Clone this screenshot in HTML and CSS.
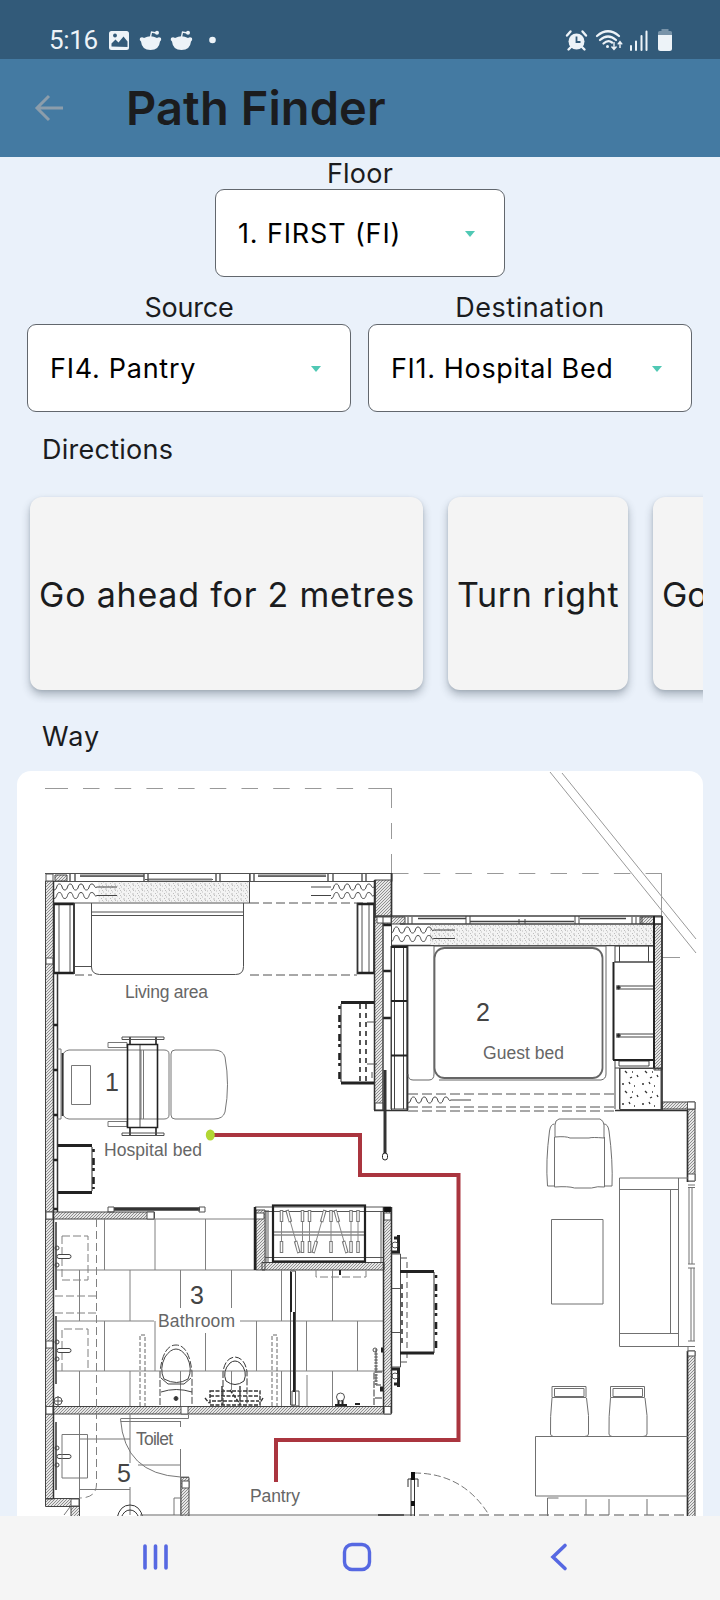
FILE: index.html
```html
<!DOCTYPE html>
<html lang="en">
<head>
<meta charset="utf-8">
<title>Path Finder</title>
<link rel="stylesheet" href="styles.css">
</head>
<body>
<div class="screen">
  <div class="status">
    <span class="clock">5:16</span>
    <svg class="status-left" width="110" height="30" viewBox="106 26 110 30">
      <rect x="109" y="31" width="20" height="19" rx="2.5" fill="#edf3f8"/>
      <path d="M111.500 46.500v-3l4-4 3 3 5-6 4 5v5.500z" fill="#325a79"/><circle cx="115" cy="35.500" r="1.900" fill="#325a79"/>
      <g id="bot"><path d="M140 38q2-1.500 4 0 6.500-3.500 13 0 2-1.500 4 0 .8 2-1 3.500-.8 8.500-9.500 8.500t-9.500-8.500q-2-1.500-1-3.500z" fill="#edf3f8"/><path d="M150.500 37l1-5 5 1" fill="none" stroke="#edf3f8" stroke-width="1.300"/><circle cx="157" cy="32.800" r="2" fill="#edf3f8"/></g>
      <use href="#bot" x="31"/>
      <circle cx="212.500" cy="40" r="3.300" fill="#edf3f8"/>
    </svg>
    <svg class="status-right" width="112" height="30" viewBox="564 26 112 30">
      <circle cx="576.500" cy="41.500" r="8" fill="#edf3f8"/>
      <path d="M567 35.500l3.500-4M586 35.500l-3.500-4M571 47l-2.500 2.500M582 47l2.500 2.500" stroke="#edf3f8" stroke-width="2.400" stroke-linecap="round"/>
      <path d="M576.500 36.500v5.500h4" fill="none" stroke="#325a79" stroke-width="1.800"/>
      <path d="M597 36q11-9.500 22 0M600 40q8-7 16 0M603.500 43.500q4.500-4 8.500-1" fill="none" stroke="#edf3f8" stroke-width="2.200" stroke-linecap="round"/>
      <circle cx="607.500" cy="46.500" r="1.500" fill="#edf3f8"/>
      <path d="M614 42v7m-2.500-2.500l2.500 3 2.500-3M620 48v-6m-2.200 2.400l2.200-2.800 2.200 2.800" fill="none" stroke="#edf3f8" stroke-width="1.400"/>
      <path d="M631 46v4M636 41.500v8.500M641.500 36v14M646.500 31.500v18.500" stroke="#edf3f8" stroke-width="2" stroke-linecap="round"/>
      <path d="M658 35v-2.500q0-1.500 1.500-1.500h2v-2h7v2h2q1.500 0 1.500 1.500v2.500z" fill="#7893a9"/>
      <path d="M658 35h14v13.500q0 2.500-2.500 2.500h-9q-2.500 0-2.500-2.500z" fill="#edf3f8"/>
    </svg>
  </div>
  <header class="appbar">
    <svg class="back" width="32" height="32" viewBox="0 0 32 32"><path d="M16 5L4 17l12 12M4 17h26" fill="none" stroke="#8c9dab" stroke-width="3"/></svg>
    <h1 class="title">Path Finder</h1>
  </header>
  <main class="content">
    <div class="field field-floor">
      <label class="label label-floor">Floor</label>
      <div class="select"><span class="val val-floor">1. FIRST (FI)</span><i class="caret"></i></div>
    </div>
    <div class="pair">
      <div class="field"><label class="label label-source">Source</label>
        <div class="select"><span class="val val-source">FI4. Pantry</span><i class="caret"></i></div></div>
      <div class="field"><label class="label label-dest">Destination</label>
        <div class="select"><span class="val val-dest">FI1. Hospital Bed</span><i class="caret"></i></div></div>
    </div>
    <h2 class="section section-directions">Directions</h2>
    <div class="steps">
      <div class="step step-first">Go ahead for 2 metres</div>
      <div class="step step-second">Turn right</div>
      <div class="step step-third">Go</div>
    </div>
    <h2 class="section section-way">Way</h2>
    <div class="map">
<svg class="plan" width="686" height="745" viewBox="17 771 686 745" fill="none" stroke="#505050" stroke-width="1">
<defs>
  <pattern id="hatch" width="3" height="3" patternUnits="userSpaceOnUse"><rect width="3" height="3" fill="#e6e6e6" stroke="none"/><path d="M-1 1L1-1M0 3L3 0M2 4L4 2" stroke="#777" stroke-width=".8"/></pattern>
  <pattern id="grain" width="9" height="5" patternUnits="userSpaceOnUse"><rect width="9" height="5" fill="#f3f3f3" stroke="none"/><path d="M0 1h1M4 2h1M7 .5h1M2 3.500h1M6 4h2M3 .5h1" stroke="#b0b0b0" stroke-width=".8"/></pattern>
  <pattern id="stone" width="20" height="20" patternUnits="userSpaceOnUse"><path d="M2 4h2M9 2l1 2M5 11l2 2M12 12h1M17 15l1 2M10 18l2-1M14 6h1" stroke="#333" stroke-width="1.300"/></pattern>
  <path id="wave" d="M0 3c3.500 0 2-6 5.400-6s2 6 5.400 6 2-6 5.400-6 2 6 5.400 6 2-6 5.400-6 2 6 5.400 6 2-6 5.400-6 2 5 5.200 3"/>
</defs>
<!-- roof outline -->
<g stroke="#999">
  <path d="M45 788.500h347" stroke-dasharray="23 15 16.500 15.200 16.500 15.200 16.500 15.200 16.500 15.200 16.500 15.200 16.500 15.200 16.500 15.200 16.500 15.200 16.500 15.200 30"/>
  <path d="M391.500 788v86" stroke-dasharray="20 15 16 15"/>
  <path d="M392 873.500h270" stroke-dasharray="16.500 15.200"/><path d="M647 873.500h14.500v42M662 957.500h18"/>
  <path d="M550 772L696 953M562 773L696 939"/>
</g>
<!-- walls -->
<g fill="url(#hatch)" stroke="#444">
  <path d="M45.500 881h8v618h-8zM45.500 1212h109v7h-109zM45.500 1406.500h346v7.500h-346zM45.500 1498.500h34v8h-34zM71 1506h8.500v12h-8.500z"/>
  <path d="M374.500 880h17v37h-17zM374.500 917h8.500v193h-8.500zM383 917h22v7h-22zM654 924h8v146h-8zM640 917h22v7h-22zM662 1102h33v7h-33zM687.500 1109h7.500v72h-7.500zM687.500 1351h7.500v167h-7.500z"/>
  <path d="M256 1210h9v60h-9zM262 1262.500h122v7.500h-122zM383.500 1207.500h8v206h-8zM181 1477.500h8v40h-8z"/>
  <path d="M55 875h12v6h-12z"/>
</g>
<g fill="#fff" stroke="#555"><path d="M46 874h7v7h-7zM46 958h7v6h-7zM46 1212h7v7h-7zM147 1212h7v7h-7zM46 1406.500h7v7.500h-7zM181 1406.500h7v7.500h-7zM384 1213h7v7h-7zM384 1406.500h7v7.500h-7zM256 1213h8v6h-8zM687.500 1102h7.500v7h-7.500zM687.500 1174h7.500v7h-7.500zM687.500 1351h7.500v5h-7.500zM654 917h8v7h-8zM375 1103h8v7h-8zM182 1481h7v7h-7zM46 1341h7v7h-7zM71 1499h8v7h-8zM377 917h14v6h-14z"/></g>
<!-- living area window band -->
<path d="M45 873.500h347v8M53 881.500h321M80 876.500h64M145 879.500h68M258 876.500h68M53 903h197"/>
<path d="M80 875.500h64M148 879.500h64M258 875.500h68" stroke-width="2" stroke="#777"/>
<path d="M70 874v7M75 874v7M144 874v7M148 874v7M216 874v7M220 874v7M250 874v7M254 874v7M328 874v7M333 874v7M362 874v7M366 874v7" stroke-width="1.400"/>
<rect x="98" y="882" width="151" height="20" fill="url(#grain)" stroke="none"/>
<path d="M249.500 874v29"/>
<g stroke="#444"><use href="#wave" x="54" y="887"/><use href="#wave" x="54" y="895.500"/><path d="M97 887h20M97 895.500h20M331 887h-20M331 895.500h-20"/><use href="#wave" x="331" y="887"/><use href="#wave" x="331" y="895.500"/></g>
<path d="M250 903h124M75 975h17M250 975h107" stroke-dasharray="9 4"/>
<path d="M54.500 903.500h19.500v70h-19.500zM59 905v68M70 905v68M357.500 903.500h16v70h-16zM362 905v68M369 905v68"/>
<path d="M54 904h20M54 973h20M357 904h17M357 973h17" stroke="#222" stroke-width="2.500"/><path d="M74 903v71M357.500 903v71" stroke="#333" stroke-width="1.800"/>
<path d="M91.500 903v64q0 7 8 7.500h136q8 0 8-8v-63.500M91.500 912h152M91.500 915.500h152M75 966.500h17"/>
<path d="M57.500 974v238M374.500 880v230" stroke="#333" stroke-width="1.500"/>
<path d="M53 1025h5M53 1070h5M53 1115h5M53 1160h5M53 1209h5M383 1018h8M383 971h8M383 925h8" stroke="#222" stroke-width="2.500"/>
<!-- guest room -->
<path d="M376 916h286M400 924h262M418 918.500h48M470 921.500h104M580 918.500h46M391.500 945.500h262" stroke="#444" stroke-width="1.300"/>
<path d="M408 917v7M412 917v7M466 916v8M470 916v8M519 919v5M525 919v5M575 916v8M579 916v8M632 917v7M636 917v7M642 917v7" stroke="#444"/>
<rect x="430" y="925" width="224" height="20" fill="url(#grain)" stroke="none"/>
<g stroke="#444"><use href="#wave" x="391" y="930"/><use href="#wave" x="391" y="938.500"/><path d="M434 930h21M434 938.500h21M451 1100h20"/><use href="#wave" x="408" y="1100"/></g>
<path d="M391.500 874v236M391 946h16v163h-16zM394.500 946v163M403.500 946v163M383 917v193" stroke="#444"/><path d="M407.500 945v165" stroke="#333" stroke-width="1.800"/>
<path d="M391 947h16M391 1001h16M391 1055.500h16" stroke="#222" stroke-width="2.200"/>
<path d="M408 1074q0 6 5 6h16q5 0 5-6V946h172v128q0 5-5 6h-162" stroke="#666"/>
<rect x="434.500" y="948" width="168" height="130" rx="10" stroke="#666" stroke-width="1.800"/>
<path d="M615 946h39v16h-39zM619.500 946v16M648.500 946v16M614 962h40v98h-40M619 1061h30v5h-30zM615 1060v49M619.500 1068v41M615 1068h47M616 986h37M616 989h37M616 1034h37M616 1037h37" stroke="#444"/>
<path d="M613.500 962v98M654 916v152" stroke="#222" stroke-width="2"/><path d="M613 1060h41" stroke="#222" stroke-width="1.800"/>
<circle cx="618.500" cy="987.500" r="1.800" fill="#222"/><circle cx="618.500" cy="1035.500" r="1.800" fill="#222"/>
<rect x="620" y="1068.500" width="41" height="41" fill="url(#stone)" stroke="#444"/>
<path d="M408 1094h207M408 1107h207M408 1111h207" stroke-dasharray="10 4"/>
<path d="M374 1110.500h34M615 1110.500h73M687.500 1110v72M375 880v37M391.500 873v44M662 916v194M687.500 1351v165" stroke="#333" stroke-width="1.700"/>
<!-- hospital bed -->
<path d="M57 1049h4v70h-4M71.500 1065.500h19v39h-19zM69 1050h95q5 0 5 4v61q0 4-5 4h-95q-6-1-6-6v-57q0-5 6-6zM175 1050h39q9 0 11 7 5 28 0 55-2 7-11 7h-39q-4 0-4-4v-61q0-4 4-4zM141 1050v69M143.500 1050v69M108 1042.500h19v5h-19zM108 1121.500h19v5h-19z" stroke="#777"/>
<path d="M62.500 1053v63" stroke="#333" stroke-width="1.800"/>
<path d="M127.500 1044.500h30v83h-30zM130 1037v8M156 1037v8M130 1127v8M156 1127v8" stroke="#222" stroke-width="1.600"/>
<path d="M140 1045v82M122 1037h42v2.500h-42zM122 1133h42v2.500h-42z"/>
<!-- cabinets with hinged fronts -->
<g stroke="#222"><path d="M58 1145.500h34M58 1192.500h34M341 1002.500h33M341 1083h33" stroke-width="3"/><path d="M92 1147v44M341 1004v78"/><path d="M93.500 1149v40M339.500 1006v74" stroke-width="2.600" stroke-dasharray="3 6 7 3"/><path d="M360 1004v78M366 1004v78" stroke="#555" stroke-width="2" stroke-dasharray="5 4"/></g>
<path d="M367 1022h9M367 1064h10M372 1072v6"/>
<path d="M385 1070v84" stroke="#333" stroke-width="3"/><rect x="382.500" y="1153" width="5" height="7" rx="2.500" stroke="#222" fill="#fff"/>
<path d="M114 1209h86" stroke="#333" stroke-width="3.500"/><path d="M108 1207h6v5h-6zM199 1207h6v5h-6z"/>
<!-- bathroom -->
<g stroke="#808080">
  <path d="M154 1219h101M57 1270h199M57 1321h97M240 1321h143M57 1371h326"/>
  <path d="M104.500 1219v51M155 1219v51M205.500 1219v51M79.500 1270v51M130 1270v51M180.500 1270v38M231.500 1270v38M281.500 1270v51M104.500 1321v50M155 1321v50M205.500 1333v38M256.500 1321v50M306.500 1321v50M332.500 1270v51M357.500 1321v50M79.500 1371v35M130 1371v35M180.500 1371v35M231.500 1371v19M281.500 1371v35M332.500 1371v35M307 1375v31"/>
  <path d="M96.500 1219v265q0 14-17 14" stroke-dasharray="8 4"/>
  <path d="M62 1236h26v44h-26zM62 1371v-42h26v42M55 1296h41M55 1313h41M316 1270v7h50v-7" stroke-dasharray="8 3"/>
  <path d="M140 1406v-71h5v71M272 1406v-71h5v71" stroke-dasharray="4 2" stroke="#666"/>
</g>
<path d="M53.500 881v618M56 1222v68M56 1316v68M56 1422v68" stroke="#333" stroke-width="1.500"/>
<g id="tap" stroke="#444"><circle cx="57" cy="1248" r="2"/><circle cx="57" cy="1265" r="2"/><rect x="57" y="1254.500" width="14" height="4" rx="2"/></g><use href="#tap" y="94"/><use href="#tap" y="200"/>
<g stroke="#444"><path d="M160 1405v-33q3-27 16-27t16 27v33" stroke-dasharray="7 2"/><path d="M164 1379q-5-10 1-22 11-16 22 0 6 12 1 22-11 7-24 0zM161 1378l7 6h16l7-6M161 1392q15-5 31 0"/><circle cx="176" cy="1398.500" r="2" fill="#333"/></g>
<g stroke="#333"><path d="M223 1405v-33q2-14 12-15 10 1 12 15v33" stroke-dasharray="7 2"/><path d="M226 1381q-4-10 4-18 5-4 10 0 8 8 4 18-9 7-18 0z"/><path d="M210 1391h50v14h-50zM210 1396h50M222 1386v19M240 1386v19M230 1390l10 14M205 1398l4 5M263 1398l-3 5M212 1401h47" stroke-width="1.400" stroke-dasharray="4 1.500"/></g>
<path d="M53 1401h10M58 1396v10" stroke="#555"/><path d="M338.500 1400v4M342.500 1400v4M335 1405h12M355 1404h5" stroke="#222" stroke-width="2"/><circle cx="58" cy="1401" r="4"/><circle cx="340.500" cy="1397" r="4"/>
<path d="M290.500 1271h5v134h-5zM292 1391h7v15h-7z"/><path d="M291 1272v40M294 1312v40M294 1352v40" stroke="#222" stroke-width="2"/>
<path d="M374 1405v-33h9M376 1349v36h6M375 1398h8" stroke="#333" stroke-dasharray="7 1.500"/><path d="M376 1353v32" stroke="#777" stroke-width="3" stroke-dasharray="2 1"/><circle cx="375" cy="1350" r="2"/><path d="M381 1350h3M380 1389h3" stroke="#222" stroke-width="5"/>
<!-- wardrobe -->
<path d="M255 1207h136M265 1211.500h118M265 1257.500h118M266 1210v52M381 1211v51M268 1210v52" stroke="#555"/>
<path d="M255 1207v63" stroke="#222" stroke-width="2.500"/><rect x="273" y="1205.500" width="92" height="56" stroke="#222" stroke-width="2.200"/>
<path d="M274 1232h90M274 1235h90"/>
<path d="M281.500 1210v42M302.500 1210v42M309.500 1210v42M331 1210v42M351 1210v42M358 1210v42M287 1210l12 42M325 1210l-12 42M335 1210l12 42" stroke="#888"/>
<path d="M281.500 1210v12M281.500 1241v12M302.500 1210v12M302.500 1241v12M309.500 1210v12M309.500 1241v12M331 1210v12M331 1241v12M351 1210v12M351 1241v12M358 1210v12M358 1241v12M287 1210l3.500 12M295.500 1241l3.500 12M325 1210l-3.500 12M316.500 1241l-3.500 12M335 1210l3.500 12M343.500 1241l3.500 12" stroke="#777" stroke-width="3.500"/><path d="M281.500 1211v10M281.500 1242v10M302.500 1211v10M302.500 1242v10M309.500 1211v10M309.500 1242v10M331 1211v10M331 1242v10M351 1211v10M351 1242v10M358 1211v10M358 1242v10M287.500 1211l2.500 10M296 1242l2.500 10M324.500 1211l-2.500 10M316 1242l-2.500 10M335.500 1211l2.500 10M344 1242l2.500 10" stroke="#fff" stroke-width="1.500"/>
<rect x="383" y="1207" width="8" height="5" fill="#111" stroke="none"/><path d="M383.500 1207v206M391.500 1207v206" stroke="#333" stroke-width="1.500"/><path d="M340 1270v5" stroke="#222" stroke-width="2"/>
<!-- hall cabinet -->
<path d="M391.500 1254h9v113h-9M392 1288.500h8M392 1332.500h8"/><path d="M398.500 1235v18M392 1252h8M394 1238h6M398.500 1369v18M392 1369h8M394 1384h6" stroke="#222" stroke-width="3"/><circle cx="395" cy="1245" r="3"/><circle cx="395" cy="1376" r="3"/>
<path d="M401 1258h6v104h-6" stroke-dasharray="6 4"/><path d="M402 1284v62" stroke-width="1.800" stroke-dasharray="5 4"/>
<path d="M400 1271.500h34M400 1353h34" stroke="#222" stroke-width="3.200"/><path d="M434 1272v81" stroke="#333"/><path d="M436 1275v76" stroke="#222" stroke-width="2.600" stroke-dasharray="3 6 7 3"/>
<!-- toilet room -->
<path d="M62 1434.500h25.500v43.500h-25.500zM79.500 1414v84M130 1414v49M130 1487v28M80 1439h50M80 1489.500h50M120.500 1418.500h68v-4M120.500 1421.500h60M120.500 1419q4 55 60 58h8.500M180.500 1421v6M180.500 1449v66M138 1465h42M174 1515v-17h7M64 1515l6-8" stroke="#777"/>
<path d="M117 1518q3-13 13-13t13 13M121 1518q3-8 9-8t9 8" stroke="#333"/>
<path d="M140 1515h250" stroke="#666"/><path d="M378 1515h26" stroke="#222" stroke-width="1.500"/>
<path d="M404 1515h284" stroke-dasharray="10 5"/><path d="M414 1473q49 0 75 42" stroke-dasharray="7 3" stroke="#777"/>
<path d="M411 1478v38M414.500 1478v38M408 1487v-8h10v8" stroke="#333"/><path d="M413 1472v8M413 1501v5" stroke="#111" stroke-width="4"/>
<!-- lounge -->
<g stroke="#707070">
  <path d="M559 1119h41q4 2 4 6v13q-12-1-15 0h-19q-4-2-15-1v-12q0-5 4-6zM554.500 1137v50q14-1 20 1h17q6-2 13-1v-50M554.500 1124q-4 0-5 7-4 30-2 55h7M604 1124q4 0 5 7 4 30 3 55h-8"/>
  <path d="M551.500 1219.500h51.500v84.500h-51.500zM619.500 1178h68.500M619.500 1178v168.500h75.500M678.500 1178v168.500M670.500 1189.500v144M619.500 1189.500h59M619.500 1333.500h59"/>
  <path d="M688 1185h7M688 1187.500h7M688 1264h7M688 1268h7M688 1341h7M692 1187v77M689 1187v77M691 1268v73M694 1268v73M688 1347v5"/>
  <path id="stool" d="M552 1386.500h34v11h-34zM554.500 1388.500h29.500v8h-29.500zM552 1398q-2 19-1.500 36 0 2 3 2.500h31q4 0 4-2.500 1-19-2-36"/><use href="#stool" x="58.500"/>
  <path d="M535.500 1436.500h152.500M535.500 1436.500v59.500h152.500M547.500 1516v-18h11M586 1499v16M609 1499v16M647 1499v16"/>
</g>
<!-- labels -->
<g class="plan-label">
  <text x="125" y="998" textLength="83">Living area</text><text x="483" y="1059" textLength="81">Guest bed</text>
  <text x="104" y="1156" textLength="98">Hospital bed</text><text x="158" y="1327" textLength="77">Bathroom</text>
  <text x="136" y="1445" textLength="37">Toilet</text><text x="250" y="1502" textLength="50">Pantry</text>
</g>
<g class="plan-number"><text x="105" y="1091">1</text><text x="476" y="1021">2</text><text x="190" y="1304">3</text><text x="117" y="1482">5</text></g>
<path d="M212 1135h148v40h98.500v265h-182.500v42" stroke="#aa353f" stroke-width="4"/>
<ellipse cx="210.300" cy="1135" rx="4.500" ry="5.500" fill="#b2d733" stroke="none"/>
</svg>
    </div>
  </main>
  <nav class="navbar">
    <svg width="28" height="30" viewBox="0 0 28 30"><path d="M4 4v22M14.500 4v22M25 4v22" stroke="#5668e2" stroke-width="3.600" stroke-linecap="round"/></svg>
    <svg width="30" height="30" viewBox="0 0 30 30"><rect x="2.500" y="2.500" width="25" height="25" rx="7.500" fill="none" stroke="#5668e2" stroke-width="3.400"/></svg>
    <svg width="20" height="30" viewBox="0 0 20 30"><path d="M16 3.500L4 15l12 11.500" fill="none" stroke="#5668e2" stroke-width="3.600" stroke-linecap="round"/></svg>
  </nav>
</div>
</body>
</html>
```

FILE: styles.css
```css
* { box-sizing: border-box; }
body { margin: 0; font-family: Inter, "Noto Sans", sans-serif; color: #1b1c1e; background: #eaf1fa; }
.screen { width: 720px; height: 1600px; display: flex; flex-direction: column; overflow: hidden; }
.status { height: 59px; flex: none; background: #325a79; display: flex; align-items: flex-start; padding: 26px 44px 0 49px; }
.clock { width: 57px; font: 26px/29px Roboto, sans-serif; letter-spacing: -0.3px; color: #edf3f8; }
.status-right { margin-left: auto; }
.appbar { height: 98px; flex: none; background: #447aa2; display: flex; align-items: center; padding: 0 0 2px 33px; }
.title { margin: 0 0 0 61px; padding-top: 2px; font-size: 47px; font-weight: 600; line-height: 60px; letter-spacing: 0.1px; white-space: nowrap; }
.content { flex: none; height: 1359px; display: flex; flex-direction: column; }
.field { display: flex; flex-direction: column; align-items: center; }
.field-floor { width: 290px; margin: 0 auto; }
.label { height: 33px; font-size: 27px; line-height: 34px; white-space: nowrap; }
.label-floor { height: 32px; letter-spacing: 0.2px; }
.label-source { letter-spacing: -0.2px; }
.label-dest { letter-spacing: 0.55px; }
.select { width: 100%; height: 88px; border: 1px solid #62676d; border-radius: 9px; background: #fff; display: flex; align-items: center; justify-content: space-between; padding: 1px 29px 0 22px; }
.val { font-size: 27px; line-height: 34px; color: #000; white-space: nowrap; }
.val-floor { letter-spacing: 0.85px; }
.val-source { letter-spacing: 0.74px; }
.val-dest { letter-spacing: 0.66px; }
.caret { width: 0; height: 0; border: 5.5px solid transparent; border-top: 6px solid #50c8b4; border-bottom: 0; }
.pair { display: grid; grid-template-columns: 324px 324px; gap: 17px; padding: 14px 0 0 27px; }
.section { margin: 0; font-size: 27px; font-weight: 400; line-height: 34px; padding-left: 42px; letter-spacing: 0.25px; }
.section-directions { padding-top: 21px; }
.steps { width: 686px; height: 220px; margin: 16px 0 0 17px; padding: 14px 0 0 13px; display: flex; gap: 25px; overflow: hidden; }
.step { flex: none; height: 193px; border-radius: 12px; background: #f4f4f4; box-shadow: 0 5px 8px rgba(40, 55, 70, .32), 0 1px 3px rgba(40, 55, 70, .12); display: flex; align-items: center; padding: 2px 0 0 9px; font-size: 34px; letter-spacing: 0.78px; white-space: nowrap; }
.step-first { width: 393px; }
.step-second { width: 180px; letter-spacing: 0.6px; }
.step-third { width: 393px; letter-spacing: 0; }
.section-way { padding-top: 17px; letter-spacing: 1px; }
.map { width: 686px; height: 745px; margin: 17px 0 0 17px; background: #fff; border-radius: 14px 14px 0 0; overflow: hidden; }
.plan { display: block; }
.plan-label { font: 17.5px "Liberation Sans", sans-serif; fill: #666; stroke: none; }
.plan-number { font: 25px "Liberation Sans", sans-serif; fill: #444; stroke: none; }
.navbar { height: 84px; flex: none; background: #f5f5f5; display: grid; grid-template-columns: 28px 30px 20px; column-gap: 173px; align-items: center; padding: 0 0 3px 141px; }
.navbar svg:last-child { margin-left: 4px; }
```
